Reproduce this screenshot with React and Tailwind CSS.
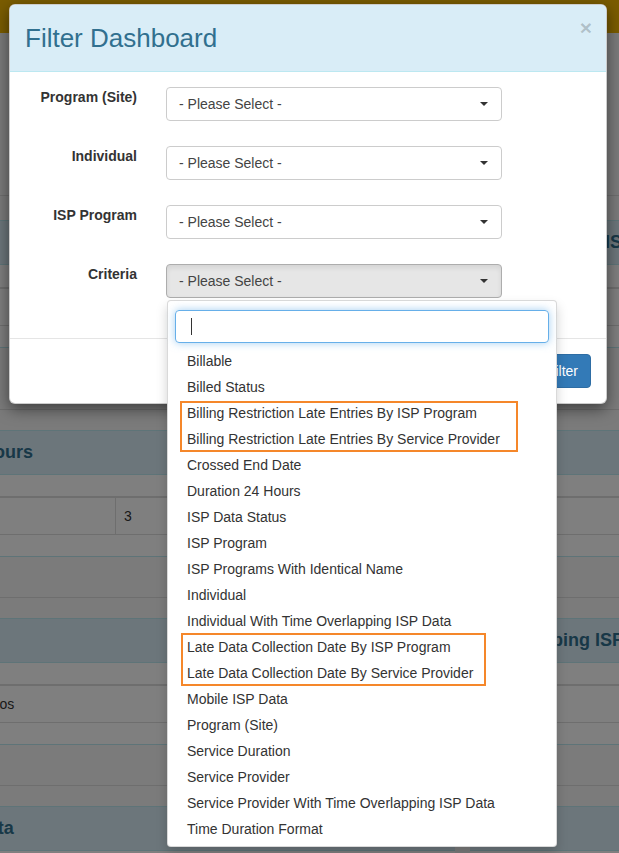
const criteria = [
  'Billable',
  'Billed Status',
  ['Billing Restriction Late Entries By ISP Program', 'Billing Restriction Late Entries By Service Provider'],
  'Crossed End Date',
  'Duration 24 Hours',
  'ISP Data Status',
  'ISP Program',
  'ISP Programs With Identical Name',
  'Individual',
  'Individual With Time Overlapping ISP Data',
  ['Late Data Collection Date By ISP Program', 'Late Data Collection Date By Service Provider'],
  'Mobile ISP Data',
  'Program (Site)',
  'Service Duration',
  'Service Provider',
  'Service Provider With Time Overlapping ISP Data',
  'Time Duration Format',
];

const fields = ['Program (Site)', 'Individual', 'ISP Program', 'Criteria'];

// dimmed page behind the modal
function Panel({ title, first, children, titleClass = 'pl-[15px]' }) {
  return (
    <div>
      <div className="h-px bg-[#dddddd]" />
      <div className={first ? 'h-[24px]' : 'h-[20px]'} />
      <div className={`flex h-[45px] items-center border-y border-[#bce8f1] bg-[#d9edf7] whitespace-nowrap text-[18px] font-bold text-[#31708f] ${titleClass}`}>
        {title}
      </div>
      <div className={`bg-white ${first ? 'h-[22px]' : 'h-[21px]'}`} />
      <div className="flex h-[38px] border-t-2 border-[#dddddd] bg-white text-[14px] text-[#333]">{children}</div>
      <div className="h-px bg-[#dddddd]" />
      <div className="h-[21px] bg-white" />
      <div className="h-px bg-[#bce8f1]" />
      <div className={first ? 'h-[61px]' : 'h-[40px]'} />
    </div>
  );
}

function Select({ active }) {
  return (
    <div
      className={`flex h-[34px] w-[336px] items-center justify-between rounded border pl-[12px] pr-[13px] text-[14px] text-[#444] ${
        active ? 'border-[#adadad] bg-[#e6e6e6] shadow-[inset_0_3px_5px_rgba(0,0,0,0.08)]' : 'border-[#cccccc] bg-white'
      }`}
    >
      <span>- Please Select -</span>
      <span className="h-0 w-0 border-x-[4px] border-t-[4px] border-x-transparent border-t-[#333]" />
    </div>
  );
}

export default function App() {
  return (
    <div className="relative h-[853px] w-[619px] overflow-hidden bg-[#f6f6f6] font-['Liberation_Sans',Arial,sans-serif]">
      {/* page */}
      <div className="h-[33px] bg-[#f5b900]" />
      <div className="h-[162px]" />
      <div className="-ml-[138px] flex gap-[15px]">
        <div className="w-[593px] shrink-0">
          <Panel first title="Billing">
            <div className="w-[254px] border-r border-[#dddddd]" />
          </Panel>
          <Panel title="Duration 24 Hours">
            <div className="w-[254px] border-r border-[#dddddd]" />
            <div className="flex items-center pl-[8px]">3</div>
          </Panel>
          <Panel title="Individual">
            <div className="w-[100px]" />
            <div className="flex items-center pl-[8px]">Demos</div>
          </Panel>
          <Panel title="Mobile ISP Data" titleClass="pl-[17px]" />
        </div>
        <div className="w-[530px] shrink-0">
          <Panel first title="Overlapping ISP Data" titleClass="pl-[25px]" />
          <Panel title="Billed" />
          <Panel title="Overlapping ISP Data" />
          <Panel title="Status" />
        </div>
      </div>

      <div className="absolute inset-0 bg-black/50" />

      {/* modal */}
      <div className="absolute left-[9px] top-[4px] w-[598px] overflow-hidden rounded-md border border-black/20 bg-white shadow-[0_5px_15px_rgba(0,0,0,0.5)]">
        <div className="flex h-[67px] justify-between border-b border-[#bce8f1] bg-[#d9edf7] pl-[15px] pr-[14px]">
          <h4 className="self-center text-[26px] leading-none text-[#31708f]">Filter Dashboard</h4>
          <span className="mt-[12px] h-fit text-[21px] font-bold leading-none text-black/20">×</span>
        </div>
        <div className="grid grid-cols-[127px_336px] gap-x-[29px] gap-y-[25px] pb-[40px] pt-[15px]">
          {fields.map((f, i) => (
            <div key={f} className="contents">
              <label className="text-right text-[14px] font-bold leading-[20px] text-[#333]">{f}</label>
              <Select active={i === 3} />
            </div>
          ))}
        </div>
        <div className="flex justify-end border-t border-[#e5e5e5] p-[15px]">
          <button className="h-[34px] rounded border border-[#2e6da4] bg-[#337ab7] px-[12px] text-[14px] text-white">Filter</button>
        </div>
      </div>

      {/* criteria dropdown */}
      <div className="absolute left-[167px] top-[300px] w-[390px] rounded border border-black/15 bg-white px-[7px] pb-[4px] pt-[9px] shadow-[0_6px_12px_rgba(0,0,0,0.175)]">
        <div className="flex h-[33px] items-center rounded border border-[#66afe9] pl-[15px] shadow-[0_0_8px_rgba(102,175,233,0.6)]">
          <span className="h-[17px] w-px bg-[#333]" />
        </div>
        <ul className="-mx-[7px] mt-[5px] text-[14px] text-[#333]">
          {criteria.map((c, i) =>
            Array.isArray(c) ? (
              <li key={i} className="relative">
                <div
                  className={`absolute border-2 border-[#f5872a] ${
                    i === 2 ? 'left-[12px] top-px h-[51px] w-[338px]' : 'left-[13px] -top-px h-[53px] w-[305px]'
                  }`}
                />
                {c.map((s) => (
                  <div key={s} className="h-[26px] whitespace-nowrap pl-[19px] leading-[26px]">{s}</div>
                ))}
              </li>
            ) : (
              <li key={c} className="h-[26px] whitespace-nowrap pl-[19px] leading-[26px]">{c}</li>
            )
          )}
        </ul>
      </div>
    </div>
  );
}
